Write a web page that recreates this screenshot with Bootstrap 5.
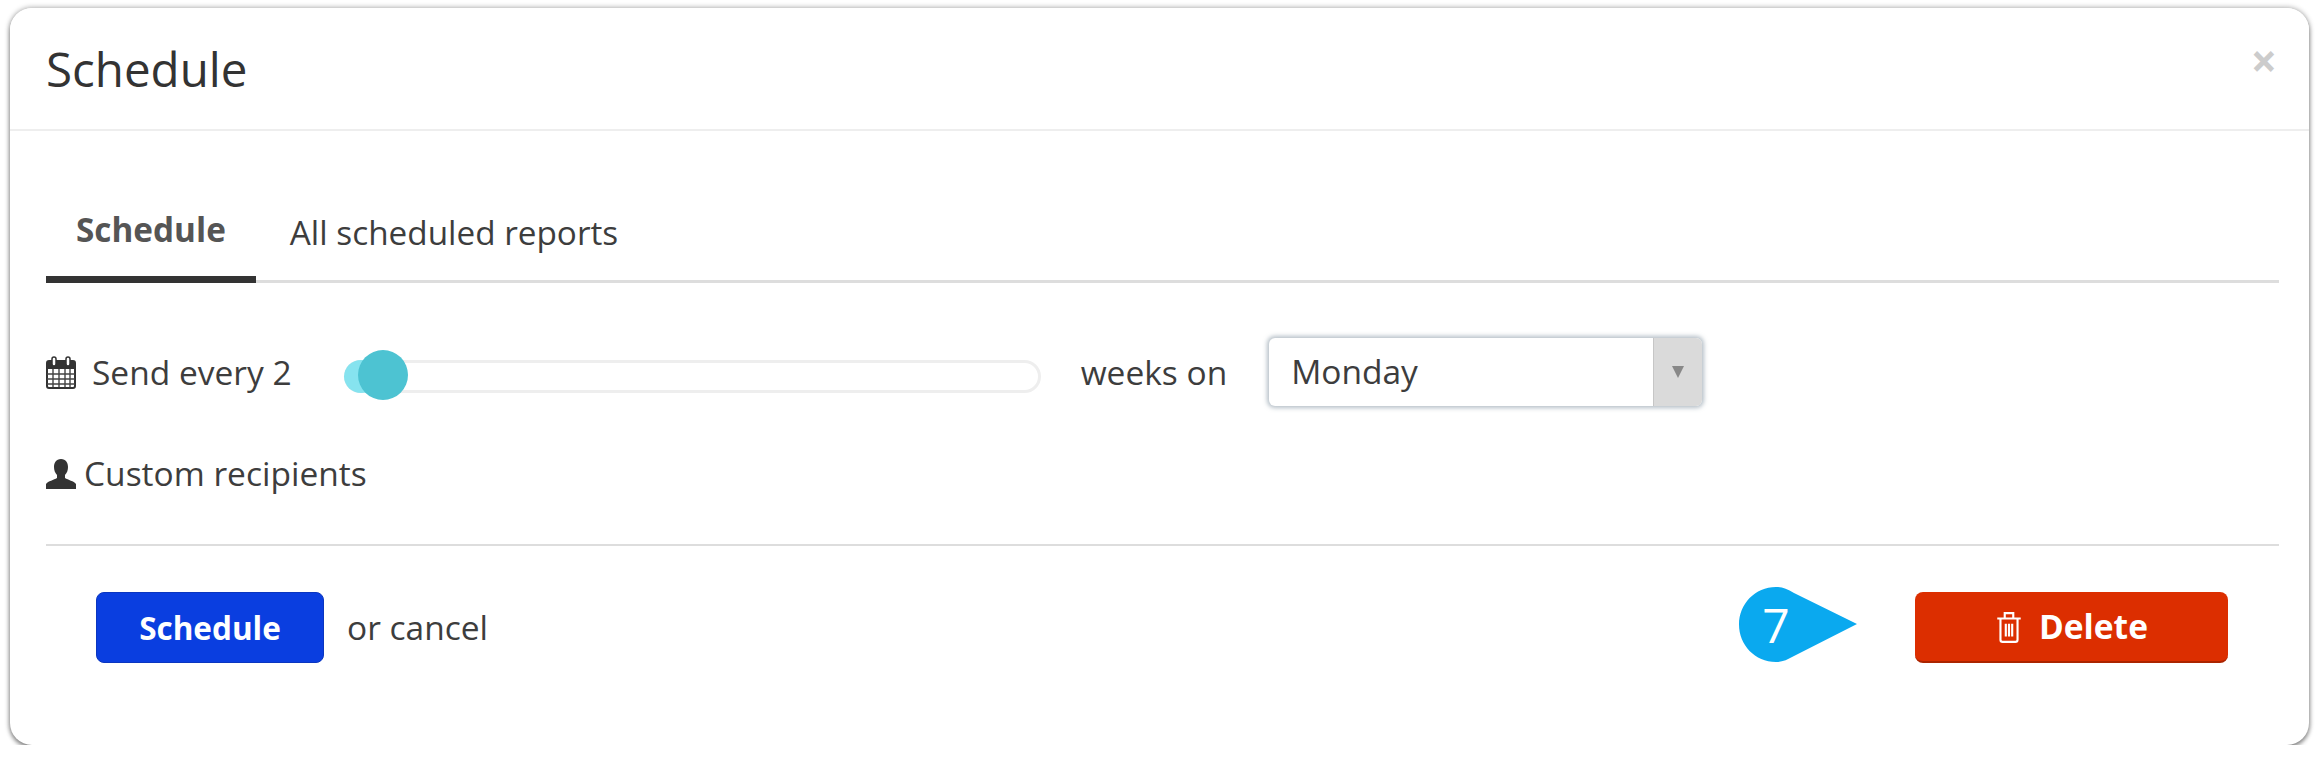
<!DOCTYPE html>
<html lang="en">
<head>
  <meta charset="UTF-8" />
  <title>Schedule</title>
  <link href="https://cdn.jsdelivr.net/npm/bootstrap@5.3.0/dist/css/bootstrap.min.css" rel="stylesheet" />
  <style>
    body { background: #fff; font-family: "Open Sans", sans-serif; color: #3d3d3d; padding: 8px 11px 0 10px; }
    .sched-card { height: 737px; border: 0; border-radius: 22px; box-shadow: 0 0 5px 1px rgba(0,0,0,.28), 0 3px 4px rgba(0,0,0,.35); }
    .sched-head { height: 123px; padding: 0 32px 0 36px; border-bottom: 2px solid #eee; background: #fff; border-radius: 22px 22px 0 0 !important; }
    .sched-title { font-size: 47.5px; color: #333; margin: 0; }
    .sched-close { font-size: 46px; font-weight: 700; color: #ccc; line-height: 1; margin-bottom: 18px; }
    .sched-body { padding: 0 30px 0 36px; }
    .sched-tabs { margin-top: 56px; height: 96px; border-bottom: 3px solid #ddd; }
    .sched-tab { padding: 21px 34px 0; font-size: 33.3px; color: #3d3d3d; height: 96px; }
    .sched-tab.on { font-weight: 700; font-size: 33.3px; color: #555; border-bottom: 7px solid #333; padding: 18px 30px 0; }
    .sched-row { height: 71px; margin-top: 54px; font-size: 33.5px; }
    .row-icon { flex: none; }
    .slide-box { position: relative; width: 697px; height: 33px; margin-top: 8px; margin-left: 52px; margin-right: 40px; border: 3px solid #eee; border-radius: 17px; }
    .slide-low { position: absolute; left: -3px; top: -3px; width: 34px; height: 33px; border-radius: 50%; background: #86e3ef; }
    .slide-high { position: absolute; left: 11px; top: -13px; width: 50px; height: 50px; border-radius: 50%; background: #4dc3d2; }
    .week-pick { width: 433px; height: 68px; margin-left: 42px; margin-bottom: 2px; border-radius: 6px; box-shadow: 0 0 4px 2px rgba(110,130,145,.5); }
    .week-pick span { flex: 1; padding-left: 22px; }
    .week-arrow { flex: none; width: 49px; background: #dadada; border-left: 1px solid #c6c6c6; border-radius: 0 6px 6px 0; }
    .recip-row { margin-top: 45px; font-size: 33.5px; height: 41px; }
    .sched-rule { margin: 50px 0 0; border: 0; border-top: 2px solid #ddd; opacity: 1; }
    .foot-row { padding: 46px 51px 0 50px; position: relative; }
    .btn-sched { width: 228px; height: 71px; background: #0a3ee0; border: 1px solid #0a36c0; border-radius: 8px; color: #fff; font-weight: 700; font-size: 31.5px; padding: 0; }
    .or-text { font-size: 33.5px; margin-left: 23px; }
    .btn-del { width: 313px; height: 71px; background: #dc2e00; border: 0; border-bottom: 2px solid #ab2400; border-radius: 8px; color: #fff; font-weight: 700; font-size: 33.5px; padding: 0; }
    .step-tag { position: absolute; left: 1693px; top: 41px; width: 118px; height: 75px; }
    .step-num { position: absolute; left: 1693px; top: 41px; width: 74px; height: 75px; line-height: 75px; text-align: center; color: #fff; font-size: 48px; font-weight: 400; }
  </style>
</head>
<body>
  <div class="card sched-card">
    <div class="card-header sched-head d-flex align-items-center justify-content-between">
      <h1 class="sched-title">Schedule</h1>
      <span class="sched-close">×</span>
    </div>
    <div class="sched-body">
      <div class="sched-tabs d-flex">
        <div class="sched-tab on">Schedule</div>
        <div class="sched-tab">All scheduled reports</div>
      </div>

      <div class="sched-row d-flex align-items-center">
        <svg class="row-icon" width="30" height="33" viewBox="0 0 30 33">
          <rect x="1" y="5" width="28" height="27" rx="2" fill="none" stroke="#333" stroke-width="2"/>
          <rect x="1" y="5" width="28" height="8" fill="#333"/>
          <path d="M1 18h28M1 23h28M1 28h28M7 13v18M13 13v18M19 13v18M24 13v18" stroke="#444" stroke-width="1.4"/>
          <rect x="6" y="1" width="4" height="9" rx="2" fill="#fff" stroke="#333" stroke-width="1.5"/>
          <rect x="20" y="1" width="4" height="9" rx="2" fill="#fff" stroke="#333" stroke-width="1.5"/>
        </svg>
        <span class="ms-3">Send every 2</span>
        <div class="slide-box">
          <div class="slide-low"></div>
          <div class="slide-high"></div>
        </div>
        <span>weeks on</span>
        <div class="week-pick d-flex align-items-stretch">
          <span class="d-flex align-items-center">Monday</span>
          <div class="week-arrow d-flex align-items-center justify-content-center">
            <svg width="14" height="14" viewBox="0 0 14 14"><path d="M1 1h12L7 13z" fill="#888"/></svg>
          </div>
        </div>
      </div>

      <div class="recip-row d-flex align-items-center">
        <svg class="row-icon me-2" width="30" height="30" viewBox="0 0 30 30">
          <path d="M15 0c5 0 7 4 7 8 0 3-1 6-3 8v3c3 2 9 3 11 6v5H0v-5c2-3 8-4 11-6v-3c-2-2-3-5-3-8 0-4 2-8 7-8z" fill="#333"/>
        </svg>
        <span>Custom recipients</span>
      </div>

      <hr class="sched-rule">

      <div class="foot-row d-flex align-items-center">
        <button class="btn btn-sched" type="button">Schedule</button>
        <span class="or-text">or cancel</span>
        <button class="btn btn-del ms-auto d-flex align-items-center justify-content-center" type="button">
          <svg class="me-3" width="28" height="32" viewBox="0 0 24 30" fill="none" stroke="#fff" stroke-width="2">
            <path d="M1 7h22M8 7V2h8v5M4 7v20a2 2 0 0 0 2 2h12a2 2 0 0 0 2-2V7M9 12v12M12 12v12M15 12v12"/>
          </svg>
          Delete
        </button>
        <svg class="step-tag" viewBox="0 0 118 75"><path d="M55 6C48 2 43 0 37 0 16 0 0 17 0 37.5S16 75 37 75c6 0 11-2 18-6l63-32z" fill="#0aa9ef"/></svg>
        <span class="step-num">7</span>
      </div>
    </div>
  </div>
  <script src="https://cdn.jsdelivr.net/npm/bootstrap@5.3.0/dist/js/bootstrap.bundle.min.js"></script>
</body>
</html>
